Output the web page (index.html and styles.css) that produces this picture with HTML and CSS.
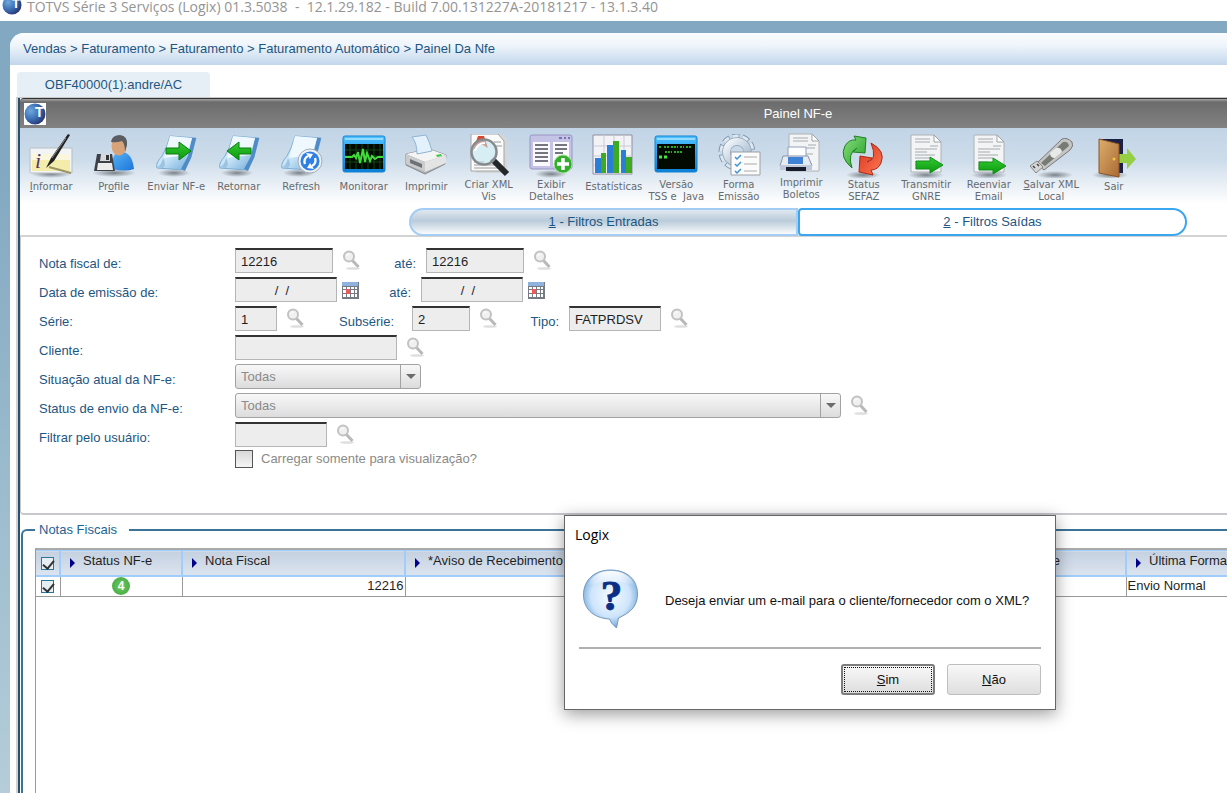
FILE: index.html
```html
<!DOCTYPE html>
<html lang="pt-BR">
<head>
<meta charset="utf-8">
<title>TOTVS Série 3 Serviços (Logix)</title>
<link rel="stylesheet" href="styles.css">
</head>
<body>
<svg class="defs" aria-hidden="true">
  <defs>
    <radialGradient id="gSphere" cx=".3" cy=".35" r=".8"><stop offset="0" stop-color="#6fa8dc"/><stop offset=".5" stop-color="#3c6fb4"/><stop offset="1" stop-color="#232a66"/></radialGradient>
    <linearGradient id="gSheet" x1="0" y1="0" x2="1" y2="1"><stop offset="0" stop-color="#f4fbff"/><stop offset=".5" stop-color="#c3e1f5"/><stop offset="1" stop-color="#5e9fd4"/></linearGradient>
    <linearGradient id="gBlue" x1="0" y1="0" x2="0" y2="1"><stop offset="0" stop-color="#4fc0ff"/><stop offset="1" stop-color="#0a7fd6"/></linearGradient>
    <linearGradient id="gGreen" x1="0" y1="0" x2="0" y2="1"><stop offset="0" stop-color="#35c935"/><stop offset="1" stop-color="#0a9a0a"/></linearGradient>
    <linearGradient id="gBody" x1="0" y1="0" x2="1" y2="1"><stop offset="0" stop-color="#58b4f5"/><stop offset="1" stop-color="#1c74d8"/></linearGradient>
    <linearGradient id="gDoor" x1="0" y1="0" x2="1" y2="1"><stop offset="0" stop-color="#dcae6c"/><stop offset="1" stop-color="#ab6a34"/></linearGradient>
    <linearGradient id="gGear" x1="0" y1="0" x2="1" y2="1"><stop offset="0" stop-color="#f4f8fb"/><stop offset="1" stop-color="#9fb4ca"/></linearGradient>
    <linearGradient id="gLeaf" x1="0" y1="0" x2="1" y2="1"><stop offset="0" stop-color="#8be07c"/><stop offset="1" stop-color="#1f9c26"/></linearGradient>
    <linearGradient id="gFire" x1="0" y1="0" x2="1" y2="1"><stop offset="0" stop-color="#d8331c"/><stop offset="1" stop-color="#ff7a55"/></linearGradient>
    <radialGradient id="gShade"><stop offset="0" stop-color="#50565c" stop-opacity=".7"/><stop offset="1" stop-color="#50565c" stop-opacity="0"/></radialGradient>
    <radialGradient id="gBubble" cx=".5" cy=".45" r=".55"><stop offset="0" stop-color="#f4faff"/><stop offset=".65" stop-color="#cfe5fb"/><stop offset=".9" stop-color="#8dbbe6"/><stop offset="1" stop-color="#6e96bf"/></radialGradient>
    <linearGradient id="gShine" x1="0" y1="0" x2="0" y2="1"><stop offset="0" stop-color="#fff"/><stop offset="1" stop-color="#fff" stop-opacity="0"/></linearGradient>
    <symbol id="logo" viewBox="0 0 20 20"><circle cx="10" cy="10" r="9.5" fill="url(#gSphere)"/><text x="14" y="13" font-family="Liberation Sans" font-weight="700" font-size="13" text-anchor="middle" fill="#fff">T</text></symbol>
    <symbol id="sheet" viewBox="0 0 44 44"><ellipse cx="20" cy="39" rx="16" ry="4" fill="url(#gShade)"/><path d="M16 2 42 4 37 23 30 36 3 34Q1 30 8 22Q13 14 16 2Z" fill="url(#gSheet)" stroke="#7caed3"/><path d="M38 4 42 4 37 24 31 37 27 35 34 22Z" fill="#4d8cc6"/><path d="M16 2 38 4 33 21 10 24Z" fill="#eef8fe"/><path d="M2 33Q7 33 9 24Q13 31 9 34Z" fill="#9cc4e2"/></symbol>
    <symbol id="paper" viewBox="0 0 44 44"><path d="M7 1H30L37 8V38H7Z" fill="#f3f4f5" stroke="#aeb2b6"/><path d="M30 1V8H37Z" fill="#fff" stroke="#9ea2a6"/><path d="M11 5h15M11 8h15M11 15h22M11 18h12M11 21h20M11 24h15M11 28h10M11 31h19M11 34h12M26 12h8" stroke="#c1c4c8" stroke-width="1.4"/></symbol>
    <symbol id="console" viewBox="0 0 44 44"><rect x="1" y="2" width="42" height="36" rx="2" fill="url(#gBlue)" stroke="#1483cf"/><path d="M3 5H41" stroke="#93dcff" stroke-width="2"/><rect x="3" y="10" width="38" height="25" fill="#020a02"/></symbol>
    <symbol id="lens" viewBox="0 0 18 20"><ellipse cx="11" cy="18.500" rx="7" ry="1.300" fill="#dedede"/><path d="m10 10 6.500 7" stroke="#b9b9b9" stroke-width="3"/><circle cx="7" cy="6.500" r="5" fill="#f0f0f0" stroke="#c2c2c2" stroke-width="2"/><path d="M4.500 6Q5 3.500 8 4" stroke="#fff" fill="none"/></symbol>
    <symbol id="calendar" viewBox="0 0 17 18"><path d="M0 1h17v17H0z" fill="#747b82"/><path d="M0 1h16v4H0z" fill="#8fb2df"/><path d="M1 6h3v2H1zm4 0h3v2H5zm4 0h3v2H9zm4 0h2v2h-2zM1 9h3v3H1zm8 0h3v3H9zm4 0h2v3h-2zM1 13h3v3H1zm4 0h3v3H5zm4 0h3v3H9zm4 0h2v3h-2z" fill="#fff"/><path d="M4 8h4v5H4z" fill="#f25a5a"/></symbol>
  </defs>
</svg>

<header class="titlebar">
  <svg class="titlebar-logo" viewBox="0 5 20 15" aria-hidden="true"><use href="#logo" width="20" height="20"/></svg>
  <span class="titlebar-text">TOTVS Série 3 Serviços (Logix) 01.3.5038&nbsp; -&nbsp; 12.1.29.182 - Build 7.00.131227A-20181217 - 13.1.3.40</span>
</header>

<main class="workspace">
  <div class="sheet">
    <nav class="crumbs" aria-label="Caminho">Vendas &gt; Faturamento &gt; Faturamento &gt; Faturamento Automático &gt; Painel Da Nfe</nav>
    <div class="doc-tabs"><button class="doc-tab" type="button">OBF40000(1):andre/AC</button></div>

    <section class="window">
      <div class="window-title">
        <svg class="window-logo" viewBox="0 0 20 20" aria-hidden="true"><use href="#logo" width="20" height="20"/></svg>
        <h1>Painel NF-e</h1>
      </div>

      <div class="toolbar" role="toolbar">
        <button class="tool" type="button"><svg viewBox="0 0 44 44"><ellipse cx="22" cy="40" rx="20" ry="4" fill="url(#gShade)"/><rect x="1" y="14" width="42" height="25" rx="1" fill="#f2f4f5" stroke="#b9bec2"/><path d="M3 20h38v17H3z" fill="#f4ecab"/><path d="M3 20h38v6H3z" fill="#faf7dc"/><text x="6" y="34" font-family="Liberation Serif" font-style="italic" font-size="22" fill="#54336e">i</text><path d="M20 33 42 39" stroke="#9c9465" stroke-width="2"/><path d="M17 34 22 24 39 0 41 1 25 27Z" fill="#222"/><path d="M23 24 37 4" stroke="#888"/></svg><span><u>I</u>nformar</span></button>
        <button class="tool" type="button"><svg viewBox="0 0 44 44"><ellipse cx="22" cy="39" rx="22" ry="4" fill="url(#gShade)"/><path d="M20 35Q19 19 28 18Q40 17 42 35Q34 38 20 35Z" fill="url(#gBody)"/><ellipse cx="27" cy="12" rx="7.500" ry="9.500" fill="#d9a37a"/><path d="M19 8Q20 1 28 1Q36 2 35 11L33 18Q33 10 30 7Q24 9 19 8Z" fill="#5b5d60"/><path d="M5 20H20L23 37H2Z" fill="#3d4047"/><path d="M9 20H18V27H8Z" fill="#d6d9dd"/><path d="M14 21h3v5h-3z" fill="#333"/><path d="M6 29H20L21 36H5Z" fill="#ececec"/></svg><span>Pr<u>o</u>file</span></button>
        <button class="tool" type="button"><svg viewBox="0 0 44 44"><use href="#sheet"/><path d="M12 14h13V8l12 9-12 9v-6H12z" fill="url(#gGreen)" stroke="#0a7c12"/></svg><span>Enviar NF-e</span></button>
        <button class="tool" type="button"><svg viewBox="0 0 44 44"><use href="#sheet"/><path d="M34 14H22V8l-12 9 12 9v-6h12z" fill="url(#gGreen)" stroke="#0a7c12"/></svg><span>Retornar</span></button>
        <button class="tool" type="button"><svg viewBox="0 0 44 44"><use href="#sheet"/><circle cx="31" cy="27" r="12" fill="#eef3f8" stroke="#a5acb5"/><circle cx="31" cy="27" r="9.500" fill="#2f80e4"/><path d="M26 30a6 6 0 0 1 3-8M36 24a6 6 0 0 1-3 8" fill="none" stroke="#fff" stroke-width="2.400"/><path d="m27 19 7 1-3 5zM35 35l-7-1 3-5z" fill="#fff"/></svg><span>Refresh</span></button>
        <button class="tool" type="button"><svg viewBox="0 0 44 44"><use href="#console"/><path d="M8 10v25M14 10v25M20 10v25M26 10v25M32 10v25M38 10v25M3 16h38M3 22h38M3 28h38" stroke="#124412"/><path d="M3 23h7l2-2 2 3 2-6 2 11 3-14 2 13 2-9 3 8 2-5 3 3 3-2h5" fill="none" stroke="#42dc3a" stroke-width="2"/></svg><span>Monitorar</span></button>
        <button class="tool" type="button"><svg viewBox="0 0 44 44"><path d="M2 20 25 15 42 21 41 30 21 40 2 31Z" fill="#aeb0b3" stroke="#85888b"/><path d="M2 20 25 15 42 21 21 28Z" fill="#f4f4f4"/><path d="M2 20 21 28V38L2 30Z" fill="#c9cbcd"/><path d="M6 25 18 30V34L6 29Z" fill="#6f7275"/><path d="M21 28 42 21V29L21 38Z" fill="#e4e4e4"/><path d="M8 3 22 1Q26 9 28 17L13 20Q13 9 8 3Z" fill="#e3f1fd" stroke="#90b5d4"/><path d="m32 21 5-1 1 2-5 1z" fill="#40c540"/></svg><span>Imprimir</span></button>
        <button class="tool two" type="button"><svg viewBox="0 0 44 44"><path d="M8 1h28l4 4v34H9z" fill="#d4d6d8"/><path d="M4 0h27l6 7v30H4z" fill="#fafafa" stroke="#a5a5a5"/><path d="M7 28h10M7 31h24M7 34h24M27 8h7M28 12h7" stroke="#bbb" stroke-width="1.500"/><path d="M6 16 11 2l6 0 4 12-5-3-4 0z" fill="#d9472f"/><path d="m25 25 15 15" stroke="#24272a" stroke-width="6"/><circle cx="17" cy="18" r="12.500" fill="#b9e5ef" fill-opacity=".55" stroke="#868b8e" stroke-width="2.500"/><path d="M8 17q2-8 10-8" stroke="#fff" stroke-width="2" fill="none"/></svg><span>Criar XML<br>Vis</span></button>
        <button class="tool two" type="button"><svg viewBox="0 0 44 44"><ellipse cx="22" cy="40" rx="16" ry="4" fill="url(#gShade)"/><rect x="1" y="1" width="42" height="34" rx="2" fill="#c5c3e5" stroke="#9896c3"/><path d="M30 4h3m2 0h2m2 0h2" stroke="#7673b6" stroke-width="2"/><path d="M4 8h17v24H4zM24 8h16v24H24z" fill="#fafafe"/><path d="M6 11h13M6 15h13M6 19h13M6 23h13M6 27h13M26 11h12M26 15h12M26 19h8" stroke="#4a4a55" stroke-width="1.500"/><circle cx="34" cy="30" r="9" fill="#32ae2c" stroke="#a2dc94"/><path d="M34 24v12M28 30h12" stroke="#fff" stroke-width="3.500"/></svg><span>Exibir<br>Detalhes</span></button>
        <button class="tool" type="button"><svg viewBox="0 0 44 44"><path d="M1 1h39v39H1z" fill="#f2f2f7" stroke="#8e90a0"/><path d="M2 12h38M2 22h38M2 31h38M12 1v39M22 1v39M32 1v39" stroke="#c9cad6"/><path d="M3 24h6v15H3zM15 11h6v28h-6zM29 16h5v23h-5z" fill="#2b7ed6"/><path d="M9 19h5v20H9zM21 7h6v32h-6zM34 23h6v16h-6z" fill="#3cab22"/></svg><span>Estatísticas</span></button>
        <button class="tool two" type="button"><svg viewBox="0 0 44 44"><use href="#console"/><path d="M5 13h3m2 0h6m1 0h7m2 0h4m2 0h5M11 18h7m2 0h9" stroke="#2da823" stroke-width="2" stroke-dasharray="2 1"/><path d="M5 23h3m2 0h3" stroke="#44e63d" stroke-width="3"/></svg><span>Versão<br>TSS e&nbsp; Java</span></button>
        <button class="tool two" type="button"><svg viewBox="0 0 44 44"><circle cx="20" cy="18" r="16" fill="none" stroke="#8199b1" stroke-width="5" stroke-dasharray="7 3.050"/><circle cx="20" cy="18" r="15.500" fill="none" stroke="#dfe8f0" stroke-width="4" stroke-dasharray="6 3.740"/><circle cx="20" cy="18" r="10.500" fill="none" stroke="#8ea4b9" stroke-width="8.500"/><circle cx="20" cy="18" r="10.500" fill="none" stroke="url(#gGear)" stroke-width="7"/><path d="M14 18h29v23H14z" fill="#fbfbfc" stroke="#9b9fa4"/><path d="m18 23 2 2 4-4M18 30l2 2 4-4M18 37l2 2 4-4" fill="none" stroke="#3d94d2" stroke-width="1.500"/><path d="M27 23h13M27 30h13M27 37h13" stroke="#aaa"/></svg><span>Forma<br>Emissão</span></button>
        <button class="tool two raised" type="button"><svg viewBox="0 0 44 44"><use href="#paper" x="3"/><path d="M9 14h18v10H9z" fill="#fcfdff" stroke="#92a2bb"/><path d="M4 23h25l4 10H1z" fill="#e6eaf3" stroke="#8791a8"/><path d="M9 24h15v7H9z" fill="#3f82d5"/><path d="M1 32h32v5H1z" fill="#bfc8da"/><path d="M7 34h20v4H7z" fill="#171c2d"/></svg><span>Imprimir<br>Boletos</span></button>
        <button class="tool two" type="button"><svg viewBox="0 0 44 44"><ellipse cx="21" cy="41" rx="17" ry="4" fill="url(#gShade)"/><path d="M10 34Q-3 23 3 12Q7 5 14 6L12 2 24 4 23 19 11 18 15 14Q5 19 10 34Z" fill="url(#gLeaf)" stroke="#1f7f24"/><path d="M29 9Q44 17 39 29Q36 36 29 36L31 41 17 38 18 22 30 24 25 28Q36 26 29 9Z" fill="url(#gFire)" stroke="#a92a17"/></svg><span>Status<br>SEFAZ</span></button>
        <button class="tool two" type="button"><svg viewBox="0 0 44 44"><ellipse cx="22" cy="41" rx="18" ry="4" fill="url(#gShade)"/><use href="#paper"/><path d="M12 27h14v-4l13 8-13 8v-4H12z" fill="url(#gGreen)" stroke="#12901c"/></svg><span>Transmitir<br>GNRE</span></button>
        <button class="tool two" type="button"><svg viewBox="0 0 44 44"><ellipse cx="22" cy="41" rx="18" ry="4" fill="url(#gShade)"/><use href="#paper"/><path d="M12 28h14v-4l13 8-13 8v-4H12z" fill="url(#gGreen)" stroke="#12901c"/></svg><span>Reenviar<br>Email</span></button>
        <button class="tool two" type="button"><svg viewBox="0 0 44 44"><ellipse cx="26" cy="41" rx="18" ry="4" fill="url(#gShade)"/><path d="M7 30 33 5Q38 3 43 8Q45 12 41 16L15 36Z" fill="#c5c6c4" stroke="#777"/><path d="M12 29 34 8Q39 7 40 12L16 32Z" fill="#767b76"/><path d="m21 19 6-5q5-1 6 4l-7 6q-5 0-5-5z" fill="#e7e9e6"/><path d="M1 32 8 27 14 33 7 39Z" fill="#d5d5d5" stroke="#888"/><path d="m4 32 2 2m2-4 2 2" stroke="#444" stroke-width="1.500"/></svg><span><u>S</u>alvar XML<br>Local</span></button>
        <button class="tool" type="button"><svg viewBox="0 0 44 44"><ellipse cx="18" cy="41" rx="18" ry="4" fill="url(#gShade)"/><path d="M7 5h24v34H7z" fill="#1b2145"/><path d="M27 20h8v-6l9 11-9 10v-6h-8z" fill="#94cf45"/><path d="M7 5 27 10V43L7 39Z" fill="url(#gDoor)" stroke="#8a5427"/><circle cx="22" cy="25" r="1.500" fill="#f1c838"/></svg><span>Sair</span></button>
      </div>

      <div class="filter-tabs" role="tablist">
        <button class="filter-tab" type="button" role="tab"><u>1</u>&nbsp;- Filtros Entradas</button>
        <button class="filter-tab active" type="button" role="tab"><u>2</u>&nbsp;- Filtros Saídas</button>
      </div>

      <form class="filters">
        <div class="row">
          <label class="name" for="nf1">Nota fiscal de:</label>
          <input class="field w-98" id="nf1" value="12216"><svg class="lens"><use href="#lens"/></svg>
          <label class="inner w-66" for="nf2">até:</label>
          <input class="field w-98" id="nf2" value="12216"><svg class="lens"><use href="#lens"/></svg>
        </div>
        <div class="row">
          <label class="name" for="dt1">Data de emissão de:</label>
          <input class="field date" id="dt1" value="/  /"><svg class="cal"><use href="#calendar"/></svg>
          <label class="inner w-62" for="dt2">até:</label>
          <input class="field date" id="dt2" value="/  /"><svg class="cal"><use href="#calendar"/></svg>
        </div>
        <div class="row">
          <label class="name" for="serie">Série:</label>
          <input class="field w-42" id="serie" value="1"><svg class="lens"><use href="#lens"/></svg>
          <label class="inner wide w-108" for="sub">Subsérie:</label>
          <input class="field w-58" id="sub" value="2"><svg class="lens"><use href="#lens"/></svg>
          <label class="inner w-72" for="tipo">Tipo:</label>
          <input class="field w-92" id="tipo" value="FATPRDSV"><svg class="lens"><use href="#lens"/></svg>
        </div>
        <div class="row">
          <label class="name" for="cli">Cliente:</label>
          <input class="field w-162" id="cli"><svg class="lens"><use href="#lens"/></svg>
        </div>
        <div class="row">
          <label class="name" for="sit">Situação atual da NF-e:</label>
          <span class="combo w-186"><select id="sit" disabled><option>Todas</option></select></span>
        </div>
        <div class="row">
          <label class="name" for="env">Status de envio da NF-e:</label>
          <span class="combo w-606"><select id="env" disabled><option>Todas</option></select></span><svg class="lens"><use href="#lens"/></svg>
        </div>
        <div class="row">
          <label class="name" for="usr">Filtrar pelo usuário:</label>
          <input class="field w-92" id="usr"><svg class="lens"><use href="#lens"/></svg>
        </div>
        <div class="check-row"><input type="checkbox" class="plain-check" id="vis" disabled><label for="vis">Carregar somente para visualização?</label></div>
      </form>

      <fieldset class="notes">
        <legend>Notas Fiscais</legend>
        <div class="grid-box">
          <table>
            <colgroup><col class="c-check"><col class="c-status"><col class="c-note"><col class="c-notice"><col class="c-hidden"><col></colgroup>
            <thead><tr>
              <th><input type="checkbox" class="tick" aria-label="Marcar todas" checked></th>
              <th><i></i>Status NF-e</th><th><i></i>Nota Fiscal</th><th><i></i>*Aviso de Recebimento</th><th class="end">NF-e</th><th><i></i>Última Forma</th>
            </tr></thead>
            <tbody><tr>
              <td><input type="checkbox" class="tick" aria-label="Marcar nota 12216" checked></td>
              <td class="mid"><b class="badge">4</b></td><td class="num">12216</td><td></td><td></td><td>Envio Normal</td>
            </tr></tbody>
          </table>
        </div>
      </fieldset>
    </section>
  </div>
</main>

<div class="dialog" role="dialog" aria-labelledby="dlg">
  <h2 id="dlg">Logix</h2>
  <div class="message">
    <svg class="bubble" viewBox="0 0 56 60" aria-hidden="true"><path d="M28 1C45 1 55 11 55 25C55 38 47 44 36 49L34 59Q28 54 27 50C9 49 1 38 1 26C1 11 12 1 28 1Z" fill="url(#gBubble)" stroke="#7899bb"/><path d="M28 2C40 2 50 8 52 17Q28 7 5 17C8 8 16 2 28 2Z" fill="url(#gShine)"/><text x="29" y="41" font-family="Liberation Serif" font-weight="700" font-size="43" text-anchor="middle" fill="#0c2f86" stroke="#0c2f86">?</text></svg>
    <p>Deseja enviar um e-mail para o cliente/fornecedor com o XML?</p>
  </div>
  <div class="actions"><button class="btn focus" type="button"><span><u>S</u>im</span></button><button class="btn" type="button"><span><u>N</u>ão</span></button></div>
</div>
</body>
</html>
```
FILE: styles.css
```css
* { box-sizing: border-box; }
body {
  margin: 0;
  height: 100vh;
  overflow: hidden;
  display: flex;
  flex-direction: column;
  background: #fff;
  font: 13px/16px "Liberation Sans", Arial, sans-serif;
  color: #1f1f1f;
}
button, input, select { font: inherit; color: inherit; margin: 0; }
.defs { position: absolute; width: 0; height: 0; }

.titlebar {
  height: 21px;
  flex: none;
  display: flex;
  gap: 5px;
  padding-left: 2px;
  color: #949494;
  font: 400 14px/14px "Open Sans", "Noto Sans", sans-serif;
  white-space: nowrap;
}
.titlebar-logo { width: 20px; height: 15px; }

.workspace {
  flex: 1;
  min-height: 0;
  display: flex;
  padding: 12px 0 0 10px;
  background: linear-gradient(#83a8c2, #83a9c2 20%, #b4cdd9);
}
.sheet {
  flex: 1;
  min-width: 0;
  display: flex;
  flex-direction: column;
  background: #fff;
  border-top-left-radius: 14px;
  overflow: hidden;
}
.crumbs {
  height: 32px;
  padding: 8px 0 0 13px;
  background: linear-gradient(#fbfdff 0%, #eef4fa 40%, #c2d7ec);
  color: #1d5682;
  white-space: nowrap;
}
.doc-tabs { height: 32px; padding: 7px 0 0 7px; display: flex; }
.doc-tab {
  width: 193px;
  border: 0;
  border-radius: 4px 4px 0 0;
  background: #e7eff6;
  color: #1d5682;
}

/* The window is wider than the visible area, its right part runs off screen */
.window {
  flex: 1;
  min-height: 0;
  margin: 0 -349px 0 6px;
  border-left: 2px solid #d2d2d2;
  border-top: 1px solid #c8c8c8;
  display: flex;
  flex-direction: column;
  box-shadow: inset 2px 0 #28506f;
  padding-left: 2px;
}
.window-title {
  height: 30px;
  display: grid;
  grid-template-columns: 32px 1fr 32px;
  align-items: center;
  background: linear-gradient(#a5a5a5 0, #6c6c6c 3px, #828282);
  border-top: 1px solid #333;
  border-top-left-radius: 4px;
}
.window-logo { width: 22px; height: 22px; margin-left: 4px; background: #fff; }
.window-title h1 { margin: 0; color: #fff; font-size: 13px; font-weight: 400; text-align: center; }

.toolbar {
  height: 80px;
  display: flex;
  align-items: flex-start;
  padding: 5px 431px 0 0;
  background: linear-gradient(#c1d4e6, #cddcea 40%, #fff 95%);
}
.tool {
  flex: 1 1 0;
  min-width: 0;
  display: flex;
  flex-direction: column;
  align-items: center;
  gap: 3px;
  padding: 1px 0 0;
  border: 0;
  background: none;
  color: #666b70;
  font: 10px/12px "DejaVu Sans", sans-serif;
  white-space: nowrap;
}
.tool svg { width: 44px; height: 44px; flex: none; }
.tool.two { gap: 1px; }
.tool.raised { padding-top: 0; gap: 0; }

.filter-tabs {
  height: 29px;
  display: flex;
  justify-content: center;
  border-bottom: 2px solid #d3d3d3;
}
.filter-tab {
  width: 389px;
  height: 28px;
  border: 2px solid #a3cdf4;
  border-radius: 14px 0 0 14px;
  background: linear-gradient(#e0e8f0, #b9cbda 45%, #fafbfc);
  color: #1d5682;
}
.filter-tab.active { border-color: #3aa6f0; border-radius: 4px 14px 14px 4px; background: #fff; }

.filters {
  height: 278px;
  display: flex;
  flex-direction: column;
  gap: 4px;
  padding: 11px 0 0 18px;
  border: solid #c6c8cc;
  border-width: 0 0 2px 1px;
  border-bottom-left-radius: 4px;
}
.row { display: flex; height: 25px; }
.row label { color: #1d5682; white-space: nowrap; padding-top: 8px; }
.name { width: 196px; }
.inner { text-align: right; padding-right: 10px; }
.inner.wide { padding-right: 18px; }
.field {
  height: 25px;
  padding: 0 5px;
  background: #ededed;
  border: 2px solid #b5b5b5;
  border-top-color: #333;
  border-width: 2px 1px 1px;
  border-radius: 0;
}
.date { width: 102px; text-align: center; padding: 0 8px 0 0; white-space: pre; }
.lens { width: 18px; height: 20px; margin: 2px 0 0 9px; }
.cal { width: 17px; height: 18px; margin: 4px 0 0 5px; }
.w-42 { width: 42px; }
.w-58 { width: 58px; }
.w-62 { width: 62px; }
.w-66 { width: 66px; }
.w-72 { width: 72px; }
.w-92 { width: 92px; }
.w-98 { width: 98px; }
.w-108 { width: 108px; }
.w-162 { width: 162px; }
.w-186 { width: 186px; }
.w-606 { width: 606px; }
.combo { position: relative; height: 25px; }
.combo select {
  appearance: none;
  width: 100%;
  height: 25px;
  padding: 0 5px;
  border: 1px solid #a2a2a2;
  border-radius: 3px;
  background: linear-gradient(#f8f8f8, #dcdcdc);
  color: #8a8a8a;
  opacity: 1;
}
.combo::before { content: ""; position: absolute; right: 20px; top: 1px; bottom: 1px; border-left: 1px solid #a2a2a2; }
.combo::after { content: ""; position: absolute; right: 5px; top: 10px; border: 5px solid transparent; border-top-color: #6c6c6c; border-bottom: 0; }
.check-row { display: flex; align-items: center; gap: 8px; margin: -1px 0 0 196px; color: #8a8a8a; }
.plain-check {
  appearance: none;
  width: 18px;
  height: 18px;
  border: 1px solid #555;
  background: linear-gradient(#d8d8d8, #f5f5f5);
}

.notes {
  flex: 1;
  min-height: 0;
  min-width: 0;
  display: flex;
  margin: 7px 0 0 1px;
  padding: 10px 0 0 12px;
  border: 2px solid #3b7399;
  border-width: 2px 0 0 2px;
  border-top-left-radius: 6px;
}
.notes legend { padding: 0 12px 0 4px; color: #1d6394; }
.grid-box { flex: 1; border: 1px solid #999; border-top: 2px solid #aaa; border-right: 0; border-bottom: 0; }
table { width: 100%; border-collapse: collapse; table-layout: fixed; }
.c-check { width: 24px; }
.c-status { width: 122px; }
.c-note { width: 223px; }
.c-notice { width: 300px; }
.c-hidden { width: 421px; }
th {
  height: 25px;
  padding: 0 0 3px 9px;
  border: 2px solid #a0cdfb;
  border-top-width: 1px;
  background: linear-gradient(#c5d1e0, #dbe4f0);
  text-align: left;
  font-weight: 400;
  white-space: nowrap;
}
th i {
  display: inline-block;
  margin-right: 8px;
  border: 5px solid transparent;
  border-left-color: #00008b;
  border-right: 0;
  vertical-align: -3px;
}
th:first-child, td:first-child { padding: 0; border-left: 0; text-align: center; }
th.end { padding-left: 325px; }
td { height: 21px; padding: 0 1px; border: 1px solid #999; border-top: 0; }
.num { text-align: right; }
.mid { text-align: center; }
.tick {
  appearance: none;
  position: relative;
  display: inline-block;
  width: 13px;
  height: 13px;
  border: 1px solid #277896;
  background: #e4eef3;
  vertical-align: middle;
}
.tick::after {
  content: "";
  position: absolute;
  left: 3px;
  top: 0;
  width: 5px;
  height: 9px;
  border: solid #333;
  border-width: 0 2px 2px 0;
  transform: rotate(40deg);
}
.badge {
  display: block;
  width: 18px;
  height: 18px;
  margin: 0 auto;
  border-radius: 50%;
  background: radial-gradient(#6ccb62, #3ea338);
  color: #fff;
  font-size: 12px;
  line-height: 18px;
}

.dialog {
  position: absolute;
  left: 564px;
  top: 515px;
  width: 492px;
  padding: 11px 14px 14px;
  border: 1px solid #666;
  background: #fff;
  box-shadow: 0 4px 16px rgba(0, 0, 0, .4);
}
.dialog h2 { margin: 0 0 0 -4px; font: 400 14px/16px "Open Sans", "Noto Sans", sans-serif; color: #000; }
.message {
  display: flex;
  align-items: center;
  gap: 26px;
  height: 106px;
  padding: 8px 0 0 3px;
  border-bottom: 2px solid #b0b0b0;
}
.message p { margin: 4px 0 0; white-space: nowrap; color: #111; }
.bubble { width: 57px; height: 60px; flex: none; }
.actions { display: flex; justify-content: flex-end; gap: 12px; padding-top: 15px; }
.btn {
  width: 94px;
  height: 31px;
  padding: 2px;
  display: flex;
  border: 1px solid #bebebe;
  border-radius: 3px;
  background: linear-gradient(#f8f8f8, #dedede);
  color: #111;
}
.btn span { flex: 1; line-height: 24px; border: 1px solid transparent; }
.btn.focus { border: 2px solid #7d7d7d; padding: 1px; }
.btn.focus span { border: 1px dotted #111; }
```
